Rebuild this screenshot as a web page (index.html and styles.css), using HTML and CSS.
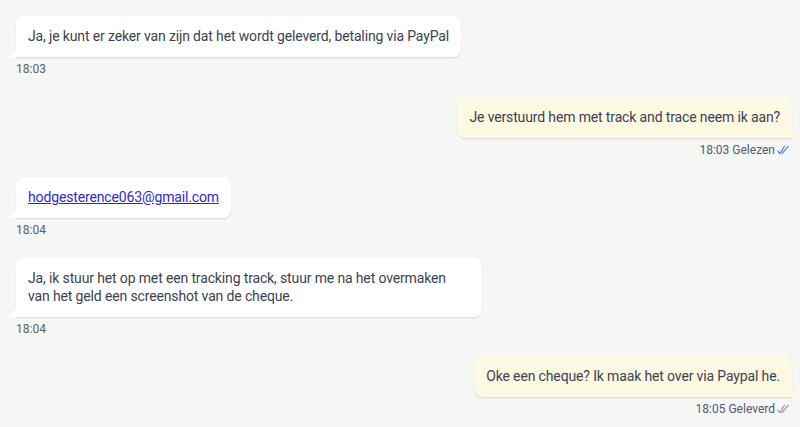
FILE: index.html
```html
<!DOCTYPE html>
<html lang="nl">
<head>
<meta charset="utf-8">
<title>Chat</title>
<link rel="stylesheet" href="styles.css">
</head>
<body>
<div class="chat">
  <div class="msg in">
    <div class="bubble">Ja, je kunt er zeker van zijn dat het wordt geleverd, betaling via PayPal</div>
    <div class="meta">18:03</div>
  </div>
  <div class="msg out">
    <div class="bubble">Je verstuurd hem met track and trace neem ik aan?</div>
    <div class="meta">18:03 Gelezen
      <svg class="check read" width="12" height="10" viewBox="0 0 12 10"><path d="M0.8 6 L2.8 8.6 L7.5 1.4 M5 8.6 L11.2 1.4" fill="none" stroke="currentColor" stroke-width="1.1" stroke-linecap="round" stroke-linejoin="round"/></svg>
    </div>
  </div>
  <div class="msg in">
    <div class="bubble"><a class="link" href="#">hodgesterence063@gmail.com</a></div>
    <div class="meta">18:04</div>
  </div>
  <div class="msg in">
    <div class="bubble multi">Ja, ik stuur het op met een tracking track, stuur me na het overmaken<br>van het geld een screenshot van de cheque.</div>
    <div class="meta">18:04</div>
  </div>
  <div class="msg out">
    <div class="bubble">Oke een cheque? Ik maak het over via Paypal he.</div>
    <div class="meta">18:05 Geleverd
      <svg class="check sent" width="12" height="10" viewBox="0 0 12 10"><path d="M0.8 6 L2.8 8.6 L7.5 1.4 M5 8.6 L11.2 1.4" fill="none" stroke="currentColor" stroke-width="1.1" stroke-linecap="round" stroke-linejoin="round"/></svg>
    </div>
  </div>
</div>
</body>
</html>
```
FILE: styles.css
```css
html, body {
  margin: 0;
  padding: 0;
  background: #f6f6f4;
}
body {
  font-family: Roboto, "Liberation Sans", Arial, sans-serif;
  color: #3c4150;
  width: 800px;
  height: 427px;
  overflow: hidden;
}
.chat {
  display: flex;
  flex-direction: column;
  gap: 20.5px;
  padding: 16px 8px 0 16px;
}
.msg {
  display: flex;
  flex-direction: column;
}
.msg.in { align-items: flex-start; }
.msg.out { align-items: flex-end; }
.bubble {
  position: relative;
  font-size: 14px;
  line-height: 19px;
  letter-spacing: -0.14px;
  padding: 11px 12px;
  border-radius: 8px;
  box-shadow: 0 1px 1.5px rgba(0, 0, 0, 0.13);
}
.bubble.multi {
  box-sizing: border-box;
  width: 466px;
  line-height: 18.5px;
}
.msg.in .bubble {
  background: #ffffff;
  border-bottom-left-radius: 0;
}
.msg.out .bubble {
  background: #fdf9e3;
  border-bottom-right-radius: 0;
}
.msg.in .bubble::before {
  content: "";
  position: absolute;
  left: -8px;
  bottom: 0;
  width: 0;
  height: 0;
  border-top: 8px solid transparent;
  border-right: 8px solid #ffffff;
}
.msg.out .bubble::after {
  content: "";
  position: absolute;
  right: -8px;
  bottom: 0;
  width: 0;
  height: 0;
  border-top: 8px solid transparent;
  border-left: 8px solid #fdf9e3;
}
.meta {
  margin-top: 5px;
  font-size: 12px;
  line-height: 14px;
  color: #5c6068;
  display: flex;
  align-items: center;
  gap: 2px;
}
.msg.out .meta {
  color: #4e5a76;
  padding-right: 3px;
}
.check.read { color: #4f7fd6; }
.check.sent { color: #8a93a6; }
.link {
  color: #2d29d6;
  text-decoration: underline;
}
```
